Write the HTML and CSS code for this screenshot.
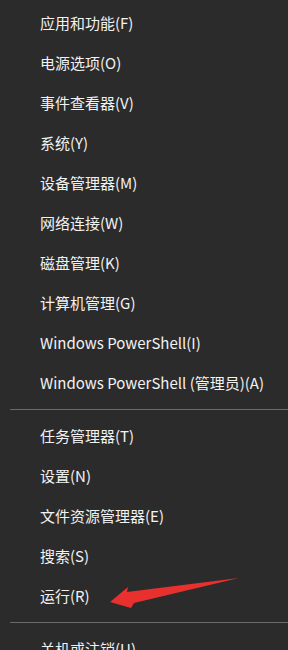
FILE: index.html
```html
<!DOCTYPE html>
<html lang="zh-CN">
<head>
    <meta charset="UTF-8">
    <meta name="viewport" content="width=device-width, initial-scale=1.0">
    <title>Win+X 菜单</title>
    <link rel="stylesheet" href="styles.css">
</head>
<body>
    <div class="menu">
        <div class="item">应用和功能(F)</div>
        <div class="item">电源选项(O)</div>
        <div class="item">事件查看器(V)</div>
        <div class="item">系统(Y)</div>
        <div class="item">设备管理器(M)</div>
        <div class="item">网络连接(W)</div>
        <div class="item">磁盘管理(K)</div>
        <div class="item">计算机管理(G)</div>
        <div class="item">Windows PowerShell(I)</div>
        <div class="item">Windows PowerShell (管理员)(A)</div>

        <div class="sep"></div>

        <div class="item">任务管理器(T)</div>
        <div class="item">设置(N)</div>
        <div class="item">文件资源管理器(E)</div>
        <div class="item">搜索(S)</div>
        <div class="item">运行(R)</div>

        <div class="sep"></div>

        <div class="item">关机或注销(U)</div>
    </div>

    <!-- 红色箭头标注 -->
    <svg class="arrow" width="288" height="650" viewBox="0 0 288 650">
        <polygon points="110,602 128,587 127,592 239,578 134,603 131,608" fill="#e8302f"/>
    </svg>
</body>
</html>
```

FILE: styles.css
```css
body {
    margin: 0;
    padding: 0;
    background-color: #2b2b2b;
    font-family: "Noto Sans CJK SC", "Noto Sans", sans-serif;
    overflow: hidden;
}
.menu {
    padding-top: 3px;
}
.item {
    height: 40px;
    line-height: 40px;
    padding-left: 40px;
    font-size: 15px;
    color: #f2f2f2;
    white-space: nowrap;
}
.sep {
    height: 1px;
    margin: 6px 0 6px 10px;
    background-color: #6a6a6a;
}
.arrow {
    position: absolute;
    left: 0;
    top: 0;
    pointer-events: none;
}
```
